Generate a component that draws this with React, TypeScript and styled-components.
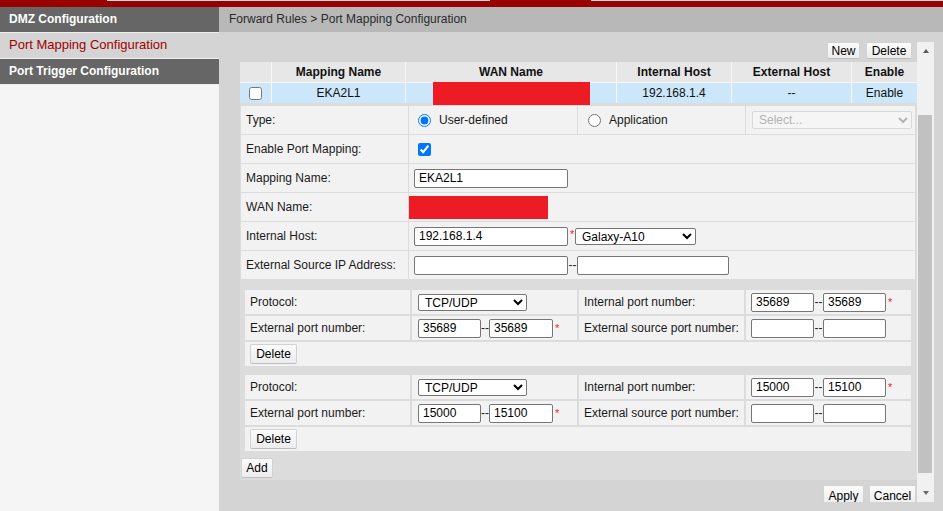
import React from "react";
import styled, { createGlobalStyle } from "styled-components";

const Global = createGlobalStyle`
  html, body { margin: 0; padding: 0; background: #d4d4d4; overflow: hidden; }
  body { font-family: "Liberation Sans", Arial, sans-serif; font-size: 12px; color: #111; }
  * { box-sizing: border-box; }
`;

const Page = styled.div`
  width: 943px;
  height: 511px;
  display: flex;
  flex-direction: column;
  overflow: hidden;
`;

const TopBar = styled.div`
  height: 7px;
  flex: none;
  background: #990000;
  display: flex;
  flex-direction: column;
`;

const TopEdge = styled.div`
  height: 1px;
  display: flex;
`;

const EdgeSeg = styled.div<{ $w?: number; $red?: boolean }>`
  height: 1px;
  ${(p) => (p.$w ? `width: ${p.$w}px; flex: none;` : "flex: 1;")}
  background: ${(p) => (p.$red ? "#990000" : "#dedede")};
`;

const Body = styled.div`
  flex: 1;
  display: flex;
  min-height: 0;
`;

const Sidebar = styled.nav`
  width: 219px;
  flex: none;
  background: #f5f5f5;
  display: flex;
  flex-direction: column;
`;

const MenuItem = styled.div<{ $active?: boolean }>`
  height: 26px;
  line-height: ${(p) => (p.$active ? "23px" : "25px")};
  padding-left: 9px;
  border-bottom: 1px solid #eeeeee;
  font-weight: ${(p) => (p.$active ? "normal" : "bold")};
  font-size: ${(p) => (p.$active ? "13px" : "12px")};
  background: ${(p) => (p.$active ? "#d4d4d4" : "#666666")};
  color: ${(p) => (p.$active ? "#a00000" : "#ffffff")};
  white-space: nowrap;
`;

const Main = styled.main`
  flex: 1;
  display: flex;
  flex-direction: column;
  min-width: 0;
`;

const Crumb = styled.div`
  height: 25px;
  line-height: 25px;
  flex: none;
  background: #b8b8b8;
  color: #2a2a2a;
  padding-left: 10px;
  font-size: 12px;
`;

const Content = styled.div`
  flex: 1;
  min-height: 0;
  background: #d4d4d4;
  padding: 10px 9px 9px 21px;
  display: flex;
`;

const Panel = styled.div`
  flex: 1;
  display: flex;
  overflow: hidden;
`;

const Scroller = styled.div`
  flex: 1;
  min-width: 0;
  overflow: hidden;
  display: flex;
  flex-direction: column;
`;

const Scrollbar = styled.div`
  width: 17px;
  flex: none;
  background: #f1f1f1;
  display: flex;
  flex-direction: column;
`;

const ArrowBtn = styled.div`
  height: 17px;
  flex: none;
  display: flex;
  align-items: center;
  justify-content: center;
`;

const Tri = styled.div<{ $down?: boolean }>`
  width: 0;
  height: 0;
  border-left: 3.5px solid transparent;
  border-right: 3.5px solid transparent;
  ${(p) =>
    p.$down
      ? "border-top: 4px solid #6a6a6a; margin-top: -2px;"
      : "border-bottom: 4px solid #5a5a5a;"}
`;

const Track = styled.div`
  flex: 1;
  display: flex;
  flex-direction: column;
`;

const Thumb = styled.div`
  margin: 56px 2px 0 1px;
  height: 358px;
  background: #c1c1c1;
`;

const Toolbar = styled.div`
  height: 20px;
  flex: none;
  display: flex;
  justify-content: flex-end;
  align-items: flex-start;
  gap: 6px;
  padding-right: 5px;
`;

const Btn = styled.button<{ $w: number; $h?: number }>`
  width: ${(p) => p.$w}px;
  height: ${(p) => p.$h ?? 20}px;
  flex: none;
  padding: 0;
  font-family: "Liberation Sans", Arial, sans-serif;
  font-size: 12px;
  color: #000;
  background: linear-gradient(#fbfbfb, #ececec);
  border: 1px solid #d2d2d2;
  border-bottom-color: #bdbdbd;
  border-radius: 2px;
  cursor: default;
`;

const ListGrid = styled.div`
  display: grid;
  grid-template-columns: 31px 133px 210px 114px 119px 1fr;
  grid-template-rows: 20px 20px;
  gap: 1px;
  background: #f7f7f7;
  flex: none;
`;

const HeadCell = styled.div`
  background: #e7e7e7;
  font-weight: bold;
  display: flex;
  align-items: center;
  justify-content: center;
  color: #111;
`;

const DataCell = styled.div`
  background: #cce6fa;
  display: flex;
  align-items: center;
  justify-content: center;
  color: #111;
`;

const WanCell = styled(DataCell)`
  justify-content: flex-start;
`;

const Redact = styled.div<{ $w: number; $h: number; $ml?: number }>`
  position: relative;
  flex: none;
  width: ${(p) => p.$w}px;
  height: ${(p) => p.$h}px;
  margin-left: ${(p) => p.$ml ?? 0}px;
  background: #ed1c24;
`;

const Check = styled.input`
  width: 13px;
  height: 13px;
  margin: 0;
`;

const Detail = styled.div`
  flex: none;
  background: #dcdcdc;
  padding: 3px 2px 2px 1px;
  display: flex;
  flex-direction: column;
`;

const FormGrid = styled.div`
  display: grid;
  grid-template-columns: 167px 168px 167px 1fr;
  grid-auto-rows: 28px;
  gap: 1px;
  background: #dcdcdc;
`;

const Cell = styled.div<{ $span?: number; $pl?: number }>`
  background: #f2f2f2;
  display: flex;
  align-items: center;
  padding-left: ${(p) => p.$pl ?? 5}px;
  grid-column: span ${(p) => p.$span ?? 1};
  color: #1a1a1a;
  white-space: nowrap;
  min-width: 0;
`;

const Radio = styled.input`
  width: 13px;
  height: 13px;
  margin: 0 8px 0 0;
`;

const TextIn = styled.input<{ $w: number; $h?: number }>`
  width: ${(p) => p.$w}px;
  height: ${(p) => p.$h ?? 19}px;
  flex: none;
  margin: 0;
  padding: 1px 4px;
  border: 1px solid #767676;
  border-radius: 2px;
  background: #fff;
  font-family: "Liberation Sans", Arial, sans-serif;
  font-size: 12px;
  color: #000;
`;

const Sel = styled.select<{ $w: number; $h?: number }>`
  width: ${(p) => p.$w}px;
  height: ${(p) => p.$h ?? 17}px;
  flex: none;
  margin: 0;
  padding: 0 0 0 2px;
  border: 1px solid #767676;
  border-radius: 2px;
  background: #fff;
  font-family: "Liberation Sans", Arial, sans-serif;
  font-size: 12px;
  color: #000;
  &:disabled {
    border-color: #cfcfcf;
    color: #9a9a9a;
    background: #f7f7f7;
  }
`;

const Dash = styled.span<{ $w?: number }>`
  width: ${(p) => p.$w ?? 9}px;
  flex: none;
  text-align: center;
  color: #222;
  overflow: hidden;
`;

const Star = styled.span`
  color: #ff2020;
  font-size: 11px;
  align-self: flex-start;
  margin-top: 7px;
  width: 7px;
  padding-left: 2px;
  flex: none;
  line-height: 10px;
`;

const PortList = styled.div`
  display: flex;
  flex-direction: column;
  gap: 9px;
  padding: 11px 4px 0 4px;
`;

const PortGrid = styled.div`
  display: grid;
  grid-template-columns: repeat(4, 165px);
  grid-auto-rows: 24px;
  gap: 2px;
`;

const AddRow = styled.div`
  padding-top: 7px;
  display: flex;
`;

const ApplyRow = styled.div`
  flex: none;
  display: flex;
  justify-content: flex-end;
  gap: 5px;
  padding: 5px 1px 0 0;
`;

type Port = { from: string; to: string };
const ports: Port[] = [
  { from: "35689", to: "35689" },
  { from: "15000", to: "15100" },
];

function PortBlock({ p }: { p: Port }) {
  return (
    <PortGrid>
      <Cell>Protocol:</Cell>
      <Cell $pl={6}>
        <Sel $w={109} defaultValue="TCP/UDP">
          <option>TCP/UDP</option>
          <option>TCP</option>
          <option>UDP</option>
        </Sel>
      </Cell>
      <Cell>Internal port number:</Cell>
      <Cell $pl={5}>
        <TextIn $w={63} defaultValue={p.from} />
        <Dash $w={9}>--</Dash>
        <TextIn $w={63} defaultValue={p.to} />
        <Star>*</Star>
      </Cell>
      <Cell>External port number:</Cell>
      <Cell $pl={6}>
        <TextIn $w={63} defaultValue={p.from} />
        <Dash $w={8}>--</Dash>
        <TextIn $w={64} defaultValue={p.to} />
        <Star>*</Star>
      </Cell>
      <Cell>External source port number:</Cell>
      <Cell $pl={5}>
        <TextIn $w={63} />
        <Dash $w={9}>--</Dash>
        <TextIn $w={63} />
      </Cell>
      <Cell $span={4}>
        <Btn $w={47} $h={20}>Delete</Btn>
      </Cell>
    </PortGrid>
  );
}

export default function App() {
  return (
    <Page>
      <Global />
      <TopBar>
        <TopEdge>
          <EdgeSeg $w={107} $red />
          <EdgeSeg $w={383} />
          <EdgeSeg $w={101} $red />
          <EdgeSeg />
        </TopEdge>
      </TopBar>
      <Body>
        <Sidebar>
          <MenuItem>DMZ Configuration</MenuItem>
          <MenuItem $active>Port Mapping Configuration</MenuItem>
          <MenuItem>Port Trigger Configuration</MenuItem>
        </Sidebar>
        <Main>
          <Crumb>Forward Rules &gt; Port Mapping Configuration</Crumb>
          <Content>
            <Panel>
              <Scroller>
                <Toolbar>
                  <Btn $w={33} $h={17}>New</Btn>
                  <Btn $w={46} $h={17}>Delete</Btn>
                </Toolbar>
                <ListGrid>
                  <HeadCell />
                  <HeadCell>Mapping Name</HeadCell>
                  <HeadCell>WAN Name</HeadCell>
                  <HeadCell>Internal Host</HeadCell>
                  <HeadCell>External Host</HeadCell>
                  <HeadCell>Enable</HeadCell>
                  <DataCell>
                    <Check type="checkbox" />
                  </DataCell>
                  <DataCell>EKA2L1</DataCell>
                  <WanCell>
                    <Redact $w={157} $h={23} $ml={27} />
                  </WanCell>
                  <DataCell>192.168.1.4</DataCell>
                  <DataCell>--</DataCell>
                  <DataCell>Enable</DataCell>
                </ListGrid>
                <Detail>
                  <FormGrid>
                    <Cell>Type:</Cell>
                    <Cell $pl={9}>
                      <Radio type="radio" name="type" defaultChecked />
                      User-defined
                    </Cell>
                    <Cell $pl={10}>
                      <Radio type="radio" name="type" />
                      Application
                    </Cell>
                    <Cell $pl={6}>
                      <Sel $w={160} $h={18} disabled defaultValue="Select...">
                        <option>Select...</option>
                      </Sel>
                    </Cell>

                    <Cell>Enable Port Mapping:</Cell>
                    <Cell $span={3} $pl={9}>
                      <Check type="checkbox" defaultChecked />
                    </Cell>

                    <Cell>Mapping Name:</Cell>
                    <Cell $span={3}>
                      <TextIn $w={154} defaultValue="EKA2L1" />
                    </Cell>

                    <Cell>WAN Name:</Cell>
                    <Cell $span={3} $pl={0}>
                      <Redact $w={139} $h={23} />
                    </Cell>

                    <Cell>Internal Host:</Cell>
                    <Cell $span={3}>
                      <TextIn $w={154} defaultValue="192.168.1.4" />
                      <Star>*</Star>
                      <Sel $w={121} defaultValue="Galaxy-A10">
                        <option>Galaxy-A10</option>
                      </Sel>
                    </Cell>

                    <Cell>External Source IP Address:</Cell>
                    <Cell $span={3}>
                      <TextIn $w={154} />
                      <Dash>--</Dash>
                      <TextIn $w={152} />
                    </Cell>
                  </FormGrid>
                  <PortList>
                    {ports.map((p, i) => (
                      <PortBlock key={i} p={p} />
                    ))}
                  </PortList>
                  <AddRow>
                    <Btn $w={32} $h={20}>Add</Btn>
                  </AddRow>
                </Detail>
                <ApplyRow>
                  <Btn $w={41} $h={22}>Apply</Btn>
                  <Btn $w={47} $h={22}>Cancel</Btn>
                </ApplyRow>
              </Scroller>
              <Scrollbar>
                <ArrowBtn>
                  <Tri />
                </ArrowBtn>
                <Track>
                  <Thumb />
                </Track>
                <ArrowBtn>
                  <Tri $down />
                </ArrowBtn>
              </Scrollbar>
            </Panel>
          </Content>
        </Main>
      </Body>
    </Page>
  );
}
